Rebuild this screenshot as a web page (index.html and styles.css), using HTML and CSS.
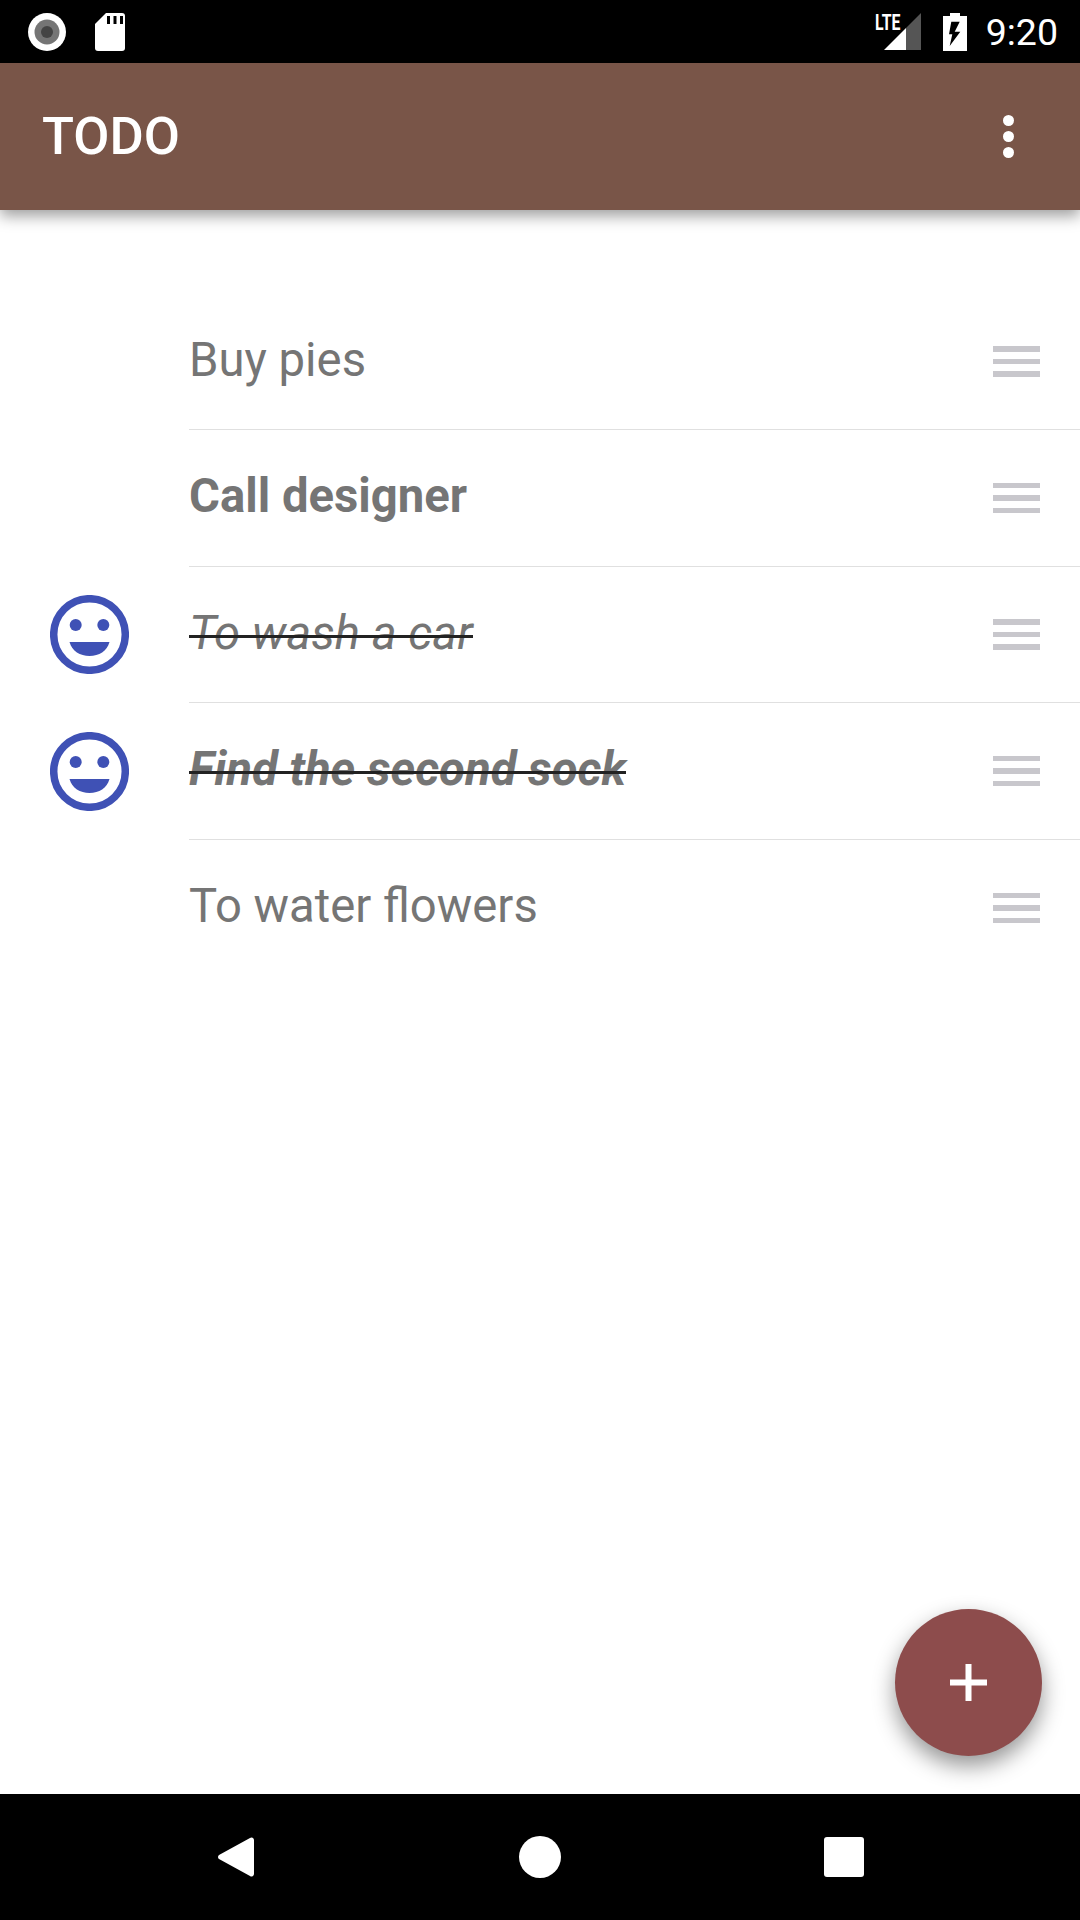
FILE: index.html
```html
<!DOCTYPE html>
<html lang="en">
  <head>
    <meta charset="UTF-8" />
    <meta name="viewport" content="width=device-width, initial-scale=1.0" />
    <title>TODO</title>
    <link rel="stylesheet" href="styles.css">
  </head>
  <body>
    <div class="screen">
      <!-- status bar -->
      <div class="status">
        <svg class="ic-ring" viewBox="0 0 38 38">
          <circle cx="19" cy="19" r="19" fill="#fff" />
          <circle cx="19" cy="19" r="12.5" fill="#757575" />
          <circle cx="19" cy="19" r="6" fill="#444" />
        </svg>
        <svg class="ic-sd" viewBox="0 0 30 38">
          <path d="M11 0H27a3 3 0 0 1 3 3V35a3 3 0 0 1-3 3H3a3 3 0 0 1-3-3V11Z" fill="#fff" />
          <path d="M12 3h3v8h-3zM18.500 3h3v8h-3zM25 3h3v8h-3z" fill="#000" />
        </svg>
        <div class="status-right">
          <div class="signal">
            <span class="lte">LTE</span>
            <svg class="ic-signal" viewBox="0 0 37 37">
              <path d="M37 0V37H22V15Z" fill="#555" />
              <path d="M22 15V37H0Z" fill="#fff" />
            </svg>
          </div>
          <svg class="ic-battery" viewBox="0 0 24 38">
            <path d="M7 0h10v3h7v35H0V3h7Z" fill="#fff" />
            <path d="M8.300 8.700H16.700L11.700 18.700H17.300L6.700 33 9.300 21.300H6Z" fill="#000" />
          </svg>
          <span class="clock">9:20</span>
        </div>
      </div>

      <!-- toolbar -->
      <div class="toolbar">
        <span class="title">TODO</span>
        <div class="more">
          <i></i>
          <i></i>
          <i></i>
        </div>
      </div>

      <!-- list -->
      <ul class="list">
        <li class="row">
          <div class="mark"></div>
          <div class="row-body">
            <span class="label">Buy pies</span>
            <div class="handle"><i></i><i></i><i></i></div>
          </div>
        </li>
        <li class="row">
          <div class="mark"></div>
          <div class="row-body">
            <span class="label bold">Call designer</span>
            <div class="handle"><i></i><i></i><i></i></div>
          </div>
        </li>
        <li class="row">
          <div class="mark">
            <svg class="smiley" viewBox="0 0 79 79">
              <circle cx="39.500" cy="39.500" r="35.800" fill="none" stroke="#3f51b5" stroke-width="7.500" />
              <circle cx="25.700" cy="30" r="6" fill="#3f51b5" />
              <circle cx="53.300" cy="30" r="6" fill="#3f51b5" />
              <path d="M19.500 47H59.500C57 56 49 61 39.500 61S22 56 19.500 47Z" fill="#3f51b5" />
            </svg>
          </div>
          <div class="row-body">
            <span class="label done">To wash a car</span>
            <div class="handle"><i></i><i></i><i></i></div>
          </div>
        </li>
        <li class="row">
          <div class="mark">
            <svg class="smiley" viewBox="0 0 79 79">
              <circle cx="39.500" cy="39.500" r="35.800" fill="none" stroke="#3f51b5" stroke-width="7.500" />
              <circle cx="25.700" cy="30" r="6" fill="#3f51b5" />
              <circle cx="53.300" cy="30" r="6" fill="#3f51b5" />
              <path d="M19.500 47H59.500C57 56 49 61 39.500 61S22 56 19.500 47Z" fill="#3f51b5" />
            </svg>
          </div>
          <div class="row-body">
            <span class="label bold done">Find the second sock</span>
            <div class="handle"><i></i><i></i><i></i></div>
          </div>
        </li>
        <li class="row last">
          <div class="mark"></div>
          <div class="row-body">
            <span class="label">To water flowers</span>
            <div class="handle"><i></i><i></i><i></i></div>
          </div>
        </li>
      </ul>

      <!-- floating button -->
      <div class="fab">
        <svg class="ic-plus" viewBox="0 0 37 37">
          <path d="M15.500 0h6v15.500H37v6H21.500V37h-6V21.500H0v-6h15.500Z" fill="#fff" />
        </svg>
      </div>

      <!-- nav bar -->
      <div class="nav">
        <svg class="ic-back" viewBox="0 0 37 42">
          <path d="M33 2 2 19a2.500 2.500 0 0 0 0 4L33 40a2.500 2.500 0 0 0 4-2V4a2.500 2.500 0 0 0-4-2Z" fill="#fff" />
        </svg>
        <div class="ic-home"></div>
        <div class="ic-recent"></div>
      </div>
    </div>
  </body>
</html>
```

FILE: styles.css
```css
* {
  margin: 0;
  padding: 0;
  box-sizing: border-box;
}

body {
  font-family: Roboto, "Liberation Sans", sans-serif;
  background-color: #fff;
}

li {
  list-style-type: none;
}

svg {
  display: block;
}

.screen {
  position: relative;
  width: 1080px;
  height: 1920px;
  display: flex;
  flex-direction: column;
  overflow: hidden;
}

/* status bar */
.status {
  height: 63px;
  background-color: #000;
  display: flex;
  align-items: center;
  padding: 0 22px 0 28px;
}
.ic-ring {
  width: 38px;
  height: 38px;
}
.ic-sd {
  width: 30px;
  height: 38px;
  margin-left: 29px;
}
.status-right {
  margin-left: auto;
  display: flex;
  align-items: center;
}
.signal {
  position: relative;
  width: 46px;
  height: 37px;
  display: flex;
  justify-content: flex-end;
}
.ic-signal {
  width: 37px;
  height: 37px;
}
.lte {
  position: absolute;
  left: 0;
  top: -3px;
  font-size: 22px;
  font-weight: 700;
  color: #fff;
  transform: scaleX(0.72);
  transform-origin: left center;
}
.ic-battery {
  width: 24px;
  height: 38px;
  margin-left: 22px;
}
.clock {
  margin-left: 19px;
  font-size: 37.5px;
  color: #fff;
}

/* toolbar */
.toolbar {
  position: relative;
  height: 147px;
  background-color: #795548;
  box-shadow: 0 6px 14px rgba(0, 0, 0, 0.38);
  display: flex;
  align-items: center;
  justify-content: space-between;
  padding: 0 66px 0 42px;
}
.title {
  font-size: 52.5px;
  font-weight: 500;
  color: #fff;
  margin-bottom: 1px;
}
.more {
  display: flex;
  flex-direction: column;
  gap: 5px;
}
.more i {
  width: 11px;
  height: 11px;
  border-radius: 50%;
  background-color: #fff;
}

/* list */
.list {
  padding-top: 83.5px;
}
.row {
  height: 136.5px;
  display: flex;
}
.mark {
  width: 189px;
  padding-left: 50px;
  display: flex;
  align-items: center;
}
.smiley {
  width: 79px;
  height: 79px;
}
.row-body {
  flex: auto;
  display: flex;
  align-items: center;
  justify-content: space-between;
  padding-right: 40px;
  border-bottom: 1px solid #e0e0e0;
}
.row.last .row-body {
  border-bottom: none;
}
.label {
  position: relative;
  font-size: 47.25px;
  color: #757575;
  margin-bottom: 3px;
}
.label.bold {
  font-weight: 700;
}
.label.done {
  font-style: italic;
}
/* the strike sits lower than the font's own line-through */
.label.done::after {
  content: "";
  position: absolute;
  left: 0;
  right: 0;
  top: 30px;
  height: 3px;
  background-color: #222;
}
.handle {
  width: 47px;
  display: flex;
  flex-direction: column;
  gap: 7px;
}
.handle i {
  height: 5.500px;
  background-color: #c8c7cc;
}

/* floating button */
.fab {
  position: absolute;
  left: 895px;
  top: 1609px;
  width: 147px;
  height: 147px;
  border-radius: 50%;
  background-color: #8d4c4c;
  box-shadow: 0 10px 22px rgba(0, 0, 0, 0.42);
  display: flex;
  align-items: center;
  justify-content: center;
}
.ic-plus {
  width: 37px;
  height: 37px;
}

/* nav bar */
.nav {
  margin-top: auto;
  height: 126px;
  background-color: #000;
  display: flex;
  align-items: center;
  padding-left: 217px;
}
.ic-back {
  width: 37px;
  height: 42px;
}
.ic-home {
  width: 42px;
  height: 42px;
  margin-left: 265px;
  border-radius: 50%;
  background-color: #fff;
}
.ic-recent {
  width: 40px;
  height: 40px;
  margin-left: 263px;
  border-radius: 3px;
  background-color: #fff;
}
```
